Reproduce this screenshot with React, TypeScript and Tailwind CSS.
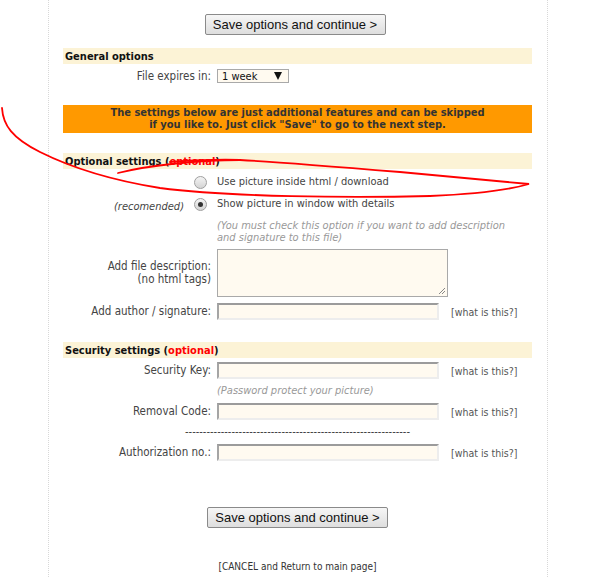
import React from "react";

const font = "font-['DejaVu_Sans_Condensed','DejaVu_Sans',sans-serif]";

function Header({ title, optional }: { title: string; optional?: boolean }) {
  return (
    <div className="h-[16px] bg-[#fcf3d6] flex items-center pl-[2px] text-[11px] font-bold text-[#111] leading-none">
      {title}
      {optional && (
        <>
          &nbsp;(<span className="text-[#f00]">optional</span>)
        </>
      )}
    </div>
  );
}

function TextInput() {
  return (
    <div className="w-[222px] h-[17px] bg-[#fffaf0] border-t-2 border-l-2 border-b-2 border-r-2 border-t-[#9b9b9b] border-l-[#a5a5a5] border-b-[#ededed] border-r-[#ededed]" />
  );
}

function Label({ children }: { children: React.ReactNode }) {
  return <div className="w-[148px] text-right text-[11.5px] leading-[13px] text-[#444]">{children}</div>;
}

function WhatIs() {
  return <div className="ml-[12px] text-[10.5px] leading-[12px] text-[#555]">[what is this?]</div>;
}

function FieldRow({ label, what = true }: { label: React.ReactNode; what?: boolean }) {
  return (
    <div className="flex items-center">
      <Label>{label}</Label>
      <div className="ml-[6px]">
        <TextInput />
      </div>
      {what && <WhatIs />}
    </div>
  );
}

function Radio({ checked }: { checked?: boolean }) {
  return (
    <div className="w-[13px] h-[13px] rounded-full border border-[#9f9f9f] bg-gradient-to-b from-[#f4f4f4] to-[#d4d4d4] flex items-center justify-center">
      {checked && <div className="w-[5px] h-[5px] rounded-full bg-[#333]" />}
    </div>
  );
}

function SaveButton({ className = "" }: { className?: string }) {
  return (
    <div className={`flex justify-center ${className}`}>
      <div className="w-[181px] h-[21px] border border-[#8a8a8a] rounded-[2px] bg-gradient-to-b from-[#f6f6f6] to-[#dedede] flex items-center justify-center font-['Liberation_Sans',Arial,sans-serif] text-[13px] text-[#111] leading-none">
        Save options and continue &gt;
      </div>
    </div>
  );
}

export default function App() {
  return (
    <div className={`relative w-full min-h-[577px] bg-white ${font}`}>
      <div className="ml-[48px] w-[500px] min-h-[577px] border-x border-dotted border-[#d8d8d8] pl-[14px] pr-[15px]">
        <div className="pt-[14px]">
          <SaveButton className="pr-[5px]" />
        </div>

        <div className="mt-[13px]">
          <Header title="General options" />
        </div>

        <div className="mt-[5px] flex items-center">
          <Label>File expires in:</Label>
          <div className="ml-[6px] w-[72px] h-[14px] border border-[#a9a9a9] bg-[#fffaf0] flex items-center justify-between pl-[4px] pr-[6px] text-[11px] leading-none text-[#111]">
            <span>1 week</span>
            <svg width="8" height="8" viewBox="0 0 8 8">
              <polygon points="0,0 8,0 4,8" fill="#111" />
            </svg>
          </div>
        </div>

        <div className="mt-[22px] h-[28px] bg-[#ff9900] flex flex-col items-center justify-center text-[11px] leading-[12px] font-bold text-[#333]">
          <div>The settings below are just additional features and can be skipped</div>
          <div>if you like to. Just click "Save" to go to the next step.</div>
        </div>

        <div className="mt-[20px]">
          <Header title="Optional settings" optional />
        </div>

        <div className="mt-[2px] h-[22px] flex items-center">
          <div className="w-[148px] flex items-center justify-end pr-[4px]">
            <Radio />
          </div>
          <div className="ml-[6px] text-[11px] leading-[12px] text-[#444]">Use picture inside html / download</div>
        </div>
        <div className="h-[22px] flex items-center">
          <div className="w-[148px] flex items-center justify-end pr-[4px]">
            <span className="italic text-[11px] leading-[12px] text-[#444] mr-[10px] mt-[6px]">(recomended)</span>
            <Radio checked />
          </div>
          <div className="ml-[6px] text-[11px] leading-[12px] text-[#444]">Show picture in window with details</div>
        </div>

        <div className="mt-[5px] ml-[154px] italic text-[11px] leading-[12px] text-[#999]">
          (You must check this option if you want to add description
          <br />
          and signature to this file)
        </div>

        <div className="mt-[5px] flex items-center">
          <Label>
            Add file description:
            <br />
            (no html tags)
          </Label>
          <div className="ml-[6px] relative w-[231px] h-[48px] border border-[#a9a9a9] bg-[#fffaf0]">
            <svg className="absolute right-[1px] bottom-[1px]" width="8" height="8" viewBox="0 0 8 8">
              <line x1="1" y1="7" x2="7" y2="1" stroke="#888" strokeWidth="1" />
              <line x1="4" y1="7" x2="7" y2="4" stroke="#888" strokeWidth="1" />
            </svg>
          </div>
        </div>

        <div className="mt-[6px]">
          <FieldRow label="Add author / signature:" />
        </div>

        <div className="mt-[22px]">
          <Header title="Security settings" optional />
        </div>

        <div className="mt-[4px]">
          <FieldRow label="Security Key:" />
        </div>

        <div className="mt-[6px] ml-[154px] italic text-[11px] leading-[12px] text-[#999]">
          (Password protect your picture)
        </div>

        <div className="mt-[6px]">
          <FieldRow label="Removal Code:" />
        </div>

        <div className="mt-[6px] h-[12px] flex justify-center">
          <div className="whitespace-nowrap text-[11px] leading-[12px] text-[#333]">
            ---------------------------------------------------------------
          </div>
        </div>

        <div className="mt-[6px]">
          <FieldRow label="Authorization no.:" />
        </div>

        <SaveButton className="mt-[46px]" />

        <div className="mt-[33px] text-center text-[10px] leading-[12px] text-[#333]">
          [CANCEL and Return to main page]
        </div>
      </div>

      <svg
        className="absolute top-0 left-0 pointer-events-none"
        width="612"
        height="577"
        viewBox="0 0 612 577"
      >
        <path
          d="M 2 108 C 3 125, 12 138, 40 152 C 70 167, 110 180, 160 188 C 230 197, 350 198, 430 196 C 480 194, 512 189, 529 184 C 500 181, 450 177, 400 172 C 340 167, 280 162, 240 160 C 210 159, 185 161, 170 162"
          fill="none"
          stroke="#f00"
          strokeWidth="1.8"
          strokeLinecap="round"
        />
        <path
          d="M 118 173 C 150 165, 200 160, 240 160"
          fill="none"
          stroke="#f00"
          strokeWidth="1.8"
          strokeLinecap="round"
        />
      </svg>
    </div>
  );
}
